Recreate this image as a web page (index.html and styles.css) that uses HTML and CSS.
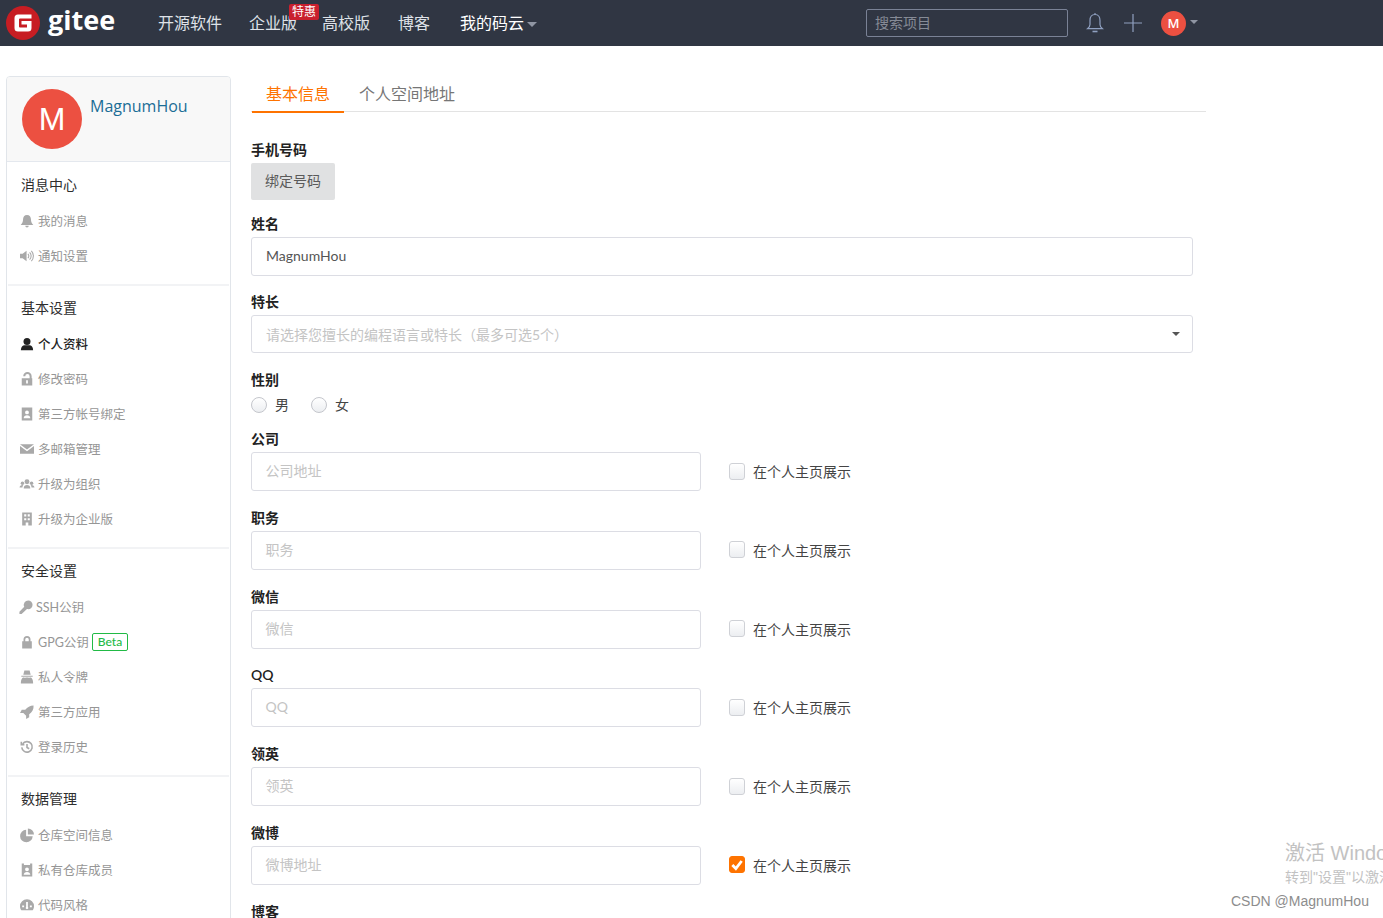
FILE: index.html
```html
<!DOCTYPE html>
<html lang="zh-CN">
<head>
<meta charset="utf-8">
<title>个人资料 - Gitee</title>
<link rel="stylesheet" href="styles.css">
</head>
<body>
<header class="topbar">
  <a class="brand">
    <svg class="brand-mark" viewBox="0 0 34 34"><circle cx="17" cy="17" r="17" fill="#c71d23"/><path d="M8.500 12a3.500 3.500 0 0 1 3.500-3.500h13.500v4H14a1 1 0 0 0-1 1v7a1 1 0 0 0 1 1h7v-3h-5.500v-3.500H25.500v7a3.500 3.500 0 0 1-3.500 3.500H12A3.500 3.500 0 0 1 8.500 22z" fill="#fff"/></svg>
    <span class="brand-name">gitee</span>
  </a>
  <nav class="nav">
    <a class="nav-item">开源软件</a>
    <a class="nav-item nav-ent">企业版<span class="nav-badge">特惠</span></a>
    <a class="nav-item nav-edu">高校版</a>
    <a class="nav-item nav-blog">博客</a>
    <a class="nav-item nav-mine">我的码云<i class="caret"></i></a>
  </nav>
  <div class="top-right">
    <div class="search">搜索项目</div>
    <svg class="top-bell" viewBox="0 0 18 22" fill="none" stroke="#8fa0c0" stroke-width="1.200"><path d="M9 2.500c-3.500 0-5 2.700-5 6v4c0 2-1 3-2.500 4.200h15C15 15.500 14 14.500 14 12.500v-4c0-3.300-1.500-6-5-6z"/><path d="M9 1v1.500"/><path d="M6.500 19.500h5" stroke-width="1.600"/></svg>
    <svg class="top-plus" viewBox="0 0 18 18" stroke="#8fa0c0" stroke-width="1.200"><path d="M0 9h18M9 0v18"/></svg>
    <span class="top-avatar">M</span>
    <i class="caret caret-small"></i>
  </div>
</header>

<main class="page">
  <aside class="side">
    <div class="side-head">
      <span class="side-avatar">M</span>
      <a class="side-name">MagnumHou</a>
    </div>
    <section class="side-group side-first">
      <h4 class="side-title">消息中心</h4>
      <a class="side-item"><svg class="ico" viewBox="0 0 16 16"><path d="M8 1c-3 0-4.500 2.200-4.500 5 0 3-1 4.800-2.700 6.500h14.400C13.500 10.800 12.500 9 12.500 6c0-2.800-1.500-5-4.500-5zM6 13.500a2 2 0 0 0 4 0z"/></svg>我的消息</a>
      <a class="side-item"><svg class="ico" viewBox="0 0 16 16"><path d="M0 5.500h3l4.500-3.500v12L3 10.500H0z"/><path d="M9 5.500a3.500 3.500 0 0 1 0 5M11 3.800a6 6 0 0 1 0 8.400M13 2.200a8.500 8.500 0 0 1 0 11.600" fill="none" stroke="#a9a9a9" stroke-width="1.200"/></svg>通知设置</a>
    </section>
    <section class="side-group">
      <h4 class="side-title">基本设置</h4>
      <a class="side-item is-active"><svg class="ico" viewBox="0 0 16 16"><circle cx="8" cy="5" r="4"/><path d="M1 15c0-3.800 2-5.500 4.200-5.500h5.600C13 9.500 15 11.200 15 15z"/></svg>个人资料</a>
      <a class="side-item"><svg class="ico" viewBox="0 0 16 16"><path d="M2 7h9V4.800a2.500 2.500 0 0 0-5 0H3.700a4.800 4.800 0 0 1 9.600 0V7h.7v8.500H2zM7 9.500v3.500h2V9.500z" fill-rule="evenodd"/></svg>修改密码</a>
      <a class="side-item"><svg class="ico" viewBox="0 0 16 16"><path d="M2 .5h12v15H2zM8 4a2.200 2.200 0 1 0 0 4.400A2.200 2.200 0 0 0 8 4zM4.200 12.800h7.600c0-2-1.700-3.400-3.800-3.400s-3.800 1.400-3.800 3.400z" fill-rule="evenodd"/></svg>第三方帐号绑定</a>
      <a class="side-item"><svg class="ico" viewBox="0 0 16 16"><path d="M0 2.500h16L8 8.500zM0 4.500l8 6 8-6v9H0z"/></svg>多邮箱管理</a>
      <a class="side-item"><svg class="ico" viewBox="0 0 16 16"><circle cx="8" cy="5.500" r="2.800"/><circle cx="2.800" cy="7" r="2"/><circle cx="13.200" cy="7" r="2"/><path d="M4.200 13c0-3 1.700-4 3.800-4s3.800 1 3.800 4zM-.5 12c0-2 1.400-3 3.300-3l1 .7C3 10.300 2.800 11 2.800 12zM16.500 12c0-2-1.400-3-3.300-3l-1 .7c.8.600 1 1.300 1 2.300z"/></svg>升级为组织</a>
      <a class="side-item"><svg class="ico" viewBox="0 0 16 16"><path d="M2.500 .5h11v15H9.500v-3.500h-3v3.500h-4zM4.800 2.500v2.500h2.400V2.500zM8.800 2.500v2.500h2.400V2.500zM4.800 7v2.500h2.400V7zM8.800 7v2.500h2.400V7z" fill-rule="evenodd"/></svg>升级为企业版</a>
    </section>
    <section class="side-group">
      <h4 class="side-title">安全设置</h4>
      <a class="side-item side-item-ssh"><svg class="ico" viewBox="0 0 16 16"><path d="M10.500 .5a5 5 0 0 1 0 10c-.5 0-1-.1-1.400-.2L3 16H.5v-2.500l5.500-5.800A5 5 0 0 1 10.500 .5z"/></svg>SSH公钥</a>
      <a class="side-item"><svg class="ico" viewBox="0 0 16 16"><path d="M2.500 7H4V5a4 4 0 0 1 8 0v2h1.500v8.500h-11zM6 7h4V5a2 2 0 0 0-4 0z" fill-rule="evenodd"/></svg>GPG公钥<span class="beta">Beta</span></a>
      <a class="side-item"><svg class="ico" viewBox="0 0 16 16"><path d="M5 .5h6l1.200 5H3.800zM1.500 6.500h13v1.200h-13zM8 8.700c1.500 0 2 .5 3.500-.2 2 0 3.500 2 3.500 7H1c0-5 1.500-7 3.500-7 1.500.7 2 .2 3.500.2z"/></svg>私人令牌</a>
      <a class="side-item"><svg class="ico" viewBox="0 0 16 16"><path d="M15.500 .5c.3 4.500-1.500 7.500-5 10v3.500L7 16v-3.800L3.800 9H0l2-3.500h4C8.500 2.300 11.500 .5 15.500 .5z"/></svg>第三方应用</a>
      <a class="side-item"><svg class="ico ico-line" viewBox="0 0 16 16"><path d="M3 4.500A6 6 0 1 1 2 8.500M8 4.500V8.500l2.500 1.500"/><path d="M1.500 2v3.500H5" /></svg>登录历史</a>
    </section>
    <section class="side-group">
      <h4 class="side-title">数据管理</h4>
      <a class="side-item"><svg class="ico" viewBox="0 0 16 16"><path d="M7 2v7.500h7.500A7.200 7.200 0 1 1 7 2zM9 .5a7 7 0 0 1 7 7H9z"/></svg>仓库空间信息</a>
      <a class="side-item"><svg class="ico" viewBox="0 0 16 16"><path d="M2 .5h2.500v1.800h7V.5H14v15H2zM8 5a2.200 2.200 0 1 0 0 4.400A2.200 2.200 0 0 0 8 5zM4.200 13.500h7.600c0-2-1.700-3.300-3.800-3.300s-3.800 1.300-3.800 3.300z" fill-rule="evenodd"/></svg>私有仓库成员</a>
      <a class="side-item"><svg class="ico" viewBox="0 0 16 16"><path d="M8 1.500a8 8 0 0 1 8 8c0 1.800-.6 3.400-1.500 4.500h-13C.6 12.900 0 11.300 0 9.500a8 8 0 0 1 8-8zM7 4.500v5.700a1.500 1.500 0 1 0 2 0V4.500zM2.500 8.500v2h2.200v-2zM11.300 8.500v2h2.200v-2z" fill-rule="evenodd"/></svg>代码风格</a>
    </section>
  </aside>

  <div class="content">
    <div class="tabs">
      <a class="tab is-current">基本信息</a>
      <a class="tab">个人空间地址</a>
    </div>
    <form class="form">
      <div class="field field-phone">
        <label class="label">手机号码</label>
        <a class="btn">绑定号码</a>
      </div>
      <div class="field field-name">
        <label class="label">姓名</label>
        <div class="input is-filled">MagnumHou</div>
      </div>
      <div class="field field-skill">
        <label class="label">特长</label>
        <div class="input select">请选择您擅长的编程语言或特长（最多可选5个）<i class="select-arrow"></i></div>
      </div>
      <div class="field field-sex">
        <label class="label">性别</label>
        <div class="radios">
          <span class="radio-wrap"><i class="radio"></i>男</span>
          <span class="radio-wrap"><i class="radio"></i>女</span>
        </div>
      </div>
      <div class="field">
        <label class="label">公司</label>
        <div class="row"><div class="input half">公司地址</div><span class="check-wrap"><i class="check"></i>在个人主页展示</span></div>
      </div>
      <div class="field">
        <label class="label">职务</label>
        <div class="row"><div class="input half">职务</div><span class="check-wrap"><i class="check"></i>在个人主页展示</span></div>
      </div>
      <div class="field">
        <label class="label">微信</label>
        <div class="row"><div class="input half">微信</div><span class="check-wrap"><i class="check"></i>在个人主页展示</span></div>
      </div>
      <div class="field">
        <label class="label">QQ</label>
        <div class="row"><div class="input half">QQ</div><span class="check-wrap"><i class="check"></i>在个人主页展示</span></div>
      </div>
      <div class="field">
        <label class="label">领英</label>
        <div class="row"><div class="input half">领英</div><span class="check-wrap"><i class="check"></i>在个人主页展示</span></div>
      </div>
      <div class="field">
        <label class="label">微博</label>
        <div class="row"><div class="input half">微博地址</div><span class="check-wrap"><i class="check is-on"><svg viewBox="0 0 12 12" fill="none" stroke="#fff" stroke-width="2.400"><path d="M2 6.500l3 3 5-6.500"/></svg></i>在个人主页展示</span></div>
      </div>
      <div class="field">
        <label class="label">博客</label>
      </div>
    </form>
  </div>
</main>

<div class="watermark">
  <div class="wm-big">激活 Windows</div>
  <div class="wm-small">转到"设置"以激活 Windows。</div>
</div>
<div class="csdn">CSDN @MagnumHou</div>
</body>
</html>
```
FILE: styles.css
```css
* { box-sizing: border-box; }
html, body { margin: 0; height: 918px; overflow: hidden; background: #fff; }
body { font-family: Lato, "Noto Sans CJK SC", sans-serif; color: #333; font-size: 14px; }
a { color: inherit; text-decoration: none; }
i { font-style: normal; }

.topbar { height: 46px; background: #303643; display: flex; align-items: center; position: relative; }
.brand { display: flex; align-items: center; margin-left: 6px; width: 152px; }
.brand-mark { width: 34px; height: 34px; flex: none; }
.brand-name { margin-left: 8px; color: #fff; font: 700 27px/34px "Open Sans", sans-serif; position: relative; top: -3px; }
.nav { display: flex; align-items: center; font-size: 16px; color: #dfe2e8; }
.nav-item { position: relative; line-height: 46px; white-space: nowrap; }
.nav-ent { margin-left: 27px; }
.nav-edu { margin-left: 25px; }
.nav-blog { margin-left: 28px; }
.nav-mine { margin-left: 30px; color: #fff; display: flex; align-items: center; }
.nav-badge { position: absolute; left: 40px; top: 4px; width: 30px; height: 16px; border-radius: 2px; background: #c9202e; color: #fff; font-size: 12px; line-height: 16px; text-align: center; }
.caret { display: inline-block; width: 0; height: 0; border: 5px solid transparent; border-top-color: #8f95a3; border-bottom: 0; margin: 3px 0 0 3px; }
.top-right { position: absolute; left: 866px; top: 0; height: 46px; display: flex; align-items: center; }
.search { width: 202px; height: 28px; border: 1px solid #7a8296; border-radius: 2px; padding-left: 8px; line-height: 26px; font-size: 14px; color: #868b96; }
.top-bell { width: 18px; height: 22px; margin-left: 18px; }
.top-plus { width: 18px; height: 18px; margin-left: 20px; }
.top-avatar { width: 25px; height: 25px; margin-left: 19px; border-radius: 50%; background: #ec5041; color: #fff; font: 600 13px/25px "Open Sans", sans-serif; text-align: center; }
.caret-small { border-width: 4px; border-bottom: 0; margin: 0 0 3px 4px; }

.page { display: flex; align-items: flex-start; padding: 30px 0 0 6px; }
.side { width: 225px; flex: none; border: 1px solid #e1e5ea; border-radius: 4px 4px 0 0; background: #fff; }
.side-head { height: 85px; background: #f8f8f8; border-bottom: 1px solid #e4e8ee; border-radius: 3px 3px 0 0; display: flex; padding: 12px 0 0 15px; }
.side-avatar { width: 60px; height: 60px; border-radius: 50%; background: #ec5041; color: #fff; flex: none; font: 400 32px/60px "Liberation Sans", sans-serif; text-align: center; }
.side-name { margin: 6px 0 0 8px; font: 400 16px/22px "Open Sans", sans-serif; color: #1b6d96; }
.side-group { padding: 12px 0 11px 13px; border-top: 2px solid #f2f3f5; margin: 0 1px; }
.side-first { border-top: 0; padding-top: 13px; }
.side-title { margin: 0 0 8px; font-size: 14px; font-weight: 400; line-height: 20px; color: #2e2e2e; white-space: nowrap; }
.side-item { display: flex; align-items: center; height: 35px; font-size: 12.500px; color: #969696; white-space: nowrap; }
.side-item.is-active { color: #222; font-weight: 500; }
.side-item.is-active .ico { fill: #222; }
.ico { width: 14px; height: 14px; fill: #a9a9a9; flex: none; margin-right: 4px; margin-left: -1px; overflow: visible; }
.ico-line { fill: none; stroke: #a9a9a9; stroke-width: 1.800; }
.side-item-ssh .ico { margin-left: -2px; margin-right: 3px; }
.beta { margin-left: 3px; height: 18px; padding: 0 5px; border: 1px solid #21ba45; border-radius: 2px; color: #21ba45; font-size: 12px; line-height: 16px; font-weight: 500; }

.content { width: 955px; margin-left: 20px; flex: none; }
.tabs { display: flex; height: 36px; border-bottom: 1px solid #e3e3e3; padding-left: 1px; }
.tab { width: 110px; font-size: 16px; line-height: 36px; color: #767676; }
.tab.is-current { width: 92px; padding-left: 14px; margin-right: 15px; height: 37px; color: #fe7300; border-bottom: 2px solid #fe7300; }
.form { width: 942px; padding-top: 28px; }
.field { margin-bottom: 16.800px; }
.label { display: block; height: 20px; line-height: 20px; margin-bottom: 3px; font-size: 14px; font-weight: 600; color: #222; }
.field-phone { margin-bottom: 14px; }
.field-name { margin-bottom: 16px; }
.field-skill { margin-bottom: 17px; }
.field-sex { margin-bottom: 14px; }
.btn { display: block; width: 84px; height: 37px; background: #e0e1e2; border-radius: 2px; text-align: center; font-size: 14px; line-height: 36px; color: #5a5a5a; }
.input { height: 39px; border: 1px solid #dcdde4; border-radius: 3px; padding-left: 14px; font-size: 14px; line-height: 36px; color: #c4c4c4; background: #fff; }
.input.is-filled { color: #555; }
.input.select { position: relative; height: 38px; line-height: 37px; }
.select-arrow { position: absolute; right: 12px; top: 16px; width: 0; height: 0; border: 4px solid transparent; border-top-color: #555; border-bottom: 0; }
.half { width: 450px; flex: none; padding-left: 13.500px; }
.row { display: flex; align-items: center; }
.radios { display: flex; height: 20px; margin-top: 5px; font-size: 14px; color: #444; align-items: center; }
.radio-wrap { display: flex; align-items: center; width: 60px; line-height: 20px; }
.radio { width: 16px; height: 16px; border-radius: 50%; border: 1px solid #c4c6cc; background: linear-gradient(#fff, #eceef1); margin-right: 8px; }
.check-wrap { display: flex; align-items: center; margin: 1px 0 0 28px; font-size: 14px; line-height: 18px; color: #444; }
.check { width: 16px; height: 17px; border: 1px solid #cfd1d6; border-radius: 3px; background: linear-gradient(#fff, #eceef1); margin-right: 8px; position: relative; top: -1px; }
.check.is-on { background: #fe7300; border-color: #fe7300; display: flex; }
.check.is-on svg { width: 14px; height: 15px; }

.watermark { position: absolute; left: 1285px; top: 840px; color: #c2c2c2; white-space: nowrap; font-family: "Liberation Sans", "Noto Sans CJK SC", sans-serif; }
.wm-big { font-size: 20px; line-height: 27px; }
.wm-small { font-size: 14px; line-height: 20px; }
.csdn { position: absolute; left: 1231px; top: 892px; font: 400 14px/18px "Liberation Sans", sans-serif; color: #8d8d8d; white-space: nowrap; }
```
